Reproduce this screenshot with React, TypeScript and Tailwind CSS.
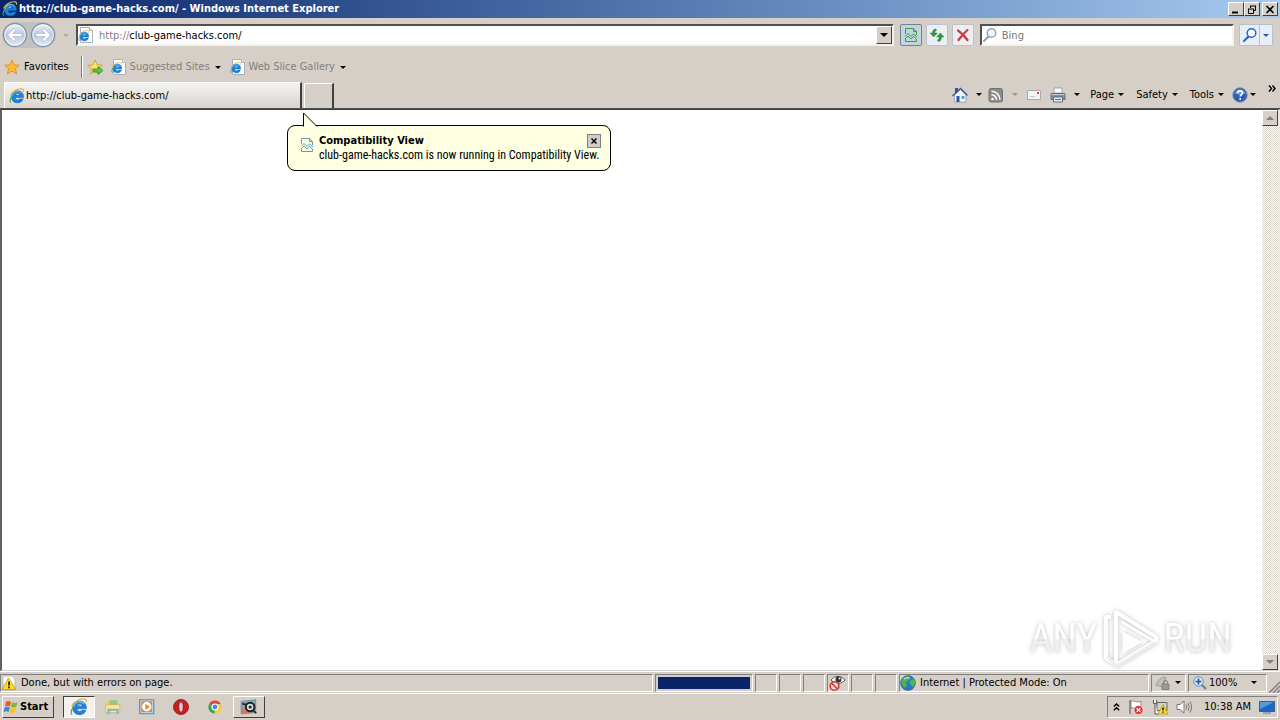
import { useState, type ReactNode } from 'react';

const IeMark = () => (
  <g>
    <path d="M4 11.500C1.500 9 2.500 4 7 2.500l5 1.500" fill="#8fd0f2" />
    <path d="M14.600 9.600H6.200c.2 1.500 1 2.300 2.400 2.300.9 0 1.500-.3 2-1h3.600c-.8 2.500-2.900 3.900-5.700 3.900-3.700 0-6-2.300-6-5.900s2.400-6.100 6-6.100c3.900 0 6.200 2.500 6.100 6.800zM6.200 7.300h4.600C10.600 5.900 9.800 5.200 8.500 5.200S6.500 5.900 6.200 7.300z" fill="#1d83dc" stroke="#1459ae" strokeWidth=".5" />
    <path d="M3.300 8C3.600 5.300 5.600 3.600 8.500 3.600c1.700 0 3 .6 3.900 1.600" fill="none" stroke="#74c8f7" strokeWidth="1" />
    <path d="M1.900 14.700C.5 13.500 1.200 10.500 3.300 7.400" fill="none" stroke="#4aa65a" strokeWidth="1.100" />
    <path d="M1.500 7.500C3 3.500 8.500 .3 13 .9c1.500.2 1.900 1.300 1.300 2.900" fill="none" stroke="#e9b32c" strokeWidth="1.100" />
  </g>
);

const IeIcon = ({ className = 'size-4' }: { className?: string }) => (
  <svg className={`${className} shrink-0`} viewBox="0 0 16 16"><IeMark /></svg>
);

const IePageIcon = () => (
  <svg className="size-4 shrink-0" viewBox="0 0 16 16">
    <path d="M2.500 .5h9l3 3v12h-12z" fill="#fff" stroke="#a7b0bc" />
    <path d="M11.500 .5v3h3" fill="#eef2f7" stroke="#a7b0bc" />
    <g transform="translate(0 3) scale(.74)"><IeMark /></g>
  </svg>
);

const Caret = ({ className = 'text-black' }: { className?: string }) => (
  <svg className={`h-[3px] w-[6px] shrink-0 ${className}`} viewBox="0 0 6 3"><path d="M0 0h6L3 3z" fill="currentColor" /></svg>
);

const StarShape = ({ small = false }: { small?: boolean }) => (
  <path
    d="M8 1l2.100 4.800 5.200.5-3.900 3.400 1.200 5.200L8 12.200l-4.600 2.700 1.200-5.200L.7 6.300l5.200-.5z"
    fill={small ? '#fbe26a' : '#fdb933'}
    stroke={small ? '#c99a18' : '#d98a1a'}
    strokeWidth=".8"
    strokeLinejoin="round"
  />
);

const ArrowCircle = ({ forward = false }: { forward?: boolean }) => (
  <svg className="size-[26px]" viewBox="0 0 26 26">
    <defs>
      <linearGradient id="orb" x1="0" y1="0" x2="0" y2="1">
        <stop offset="0" stopColor="#eef2f8" />
        <stop offset=".5" stopColor="#b9c9dd" />
        <stop offset="1" stopColor="#e4eef8" />
      </linearGradient>
    </defs>
    <circle cx="13" cy="13" r="11.500" fill="url(#orb)" stroke="#8492a5" strokeWidth="1.300" />
    <circle cx="13" cy="13" r="10.200" fill="none" stroke="#fff" strokeOpacity=".7" />
    <path
      d="M5.500 13l6.500-6.500 1.800 1.800L10.700 11.500H20v3h-9.300l3.100 3.200-1.800 1.800z"
      transform={forward ? 'rotate(180 13 13)' : undefined}
      fill="#fff"
      stroke="#9fb0c5"
      strokeWidth=".6"
    />
  </svg>
);

const Magnifier = ({ color, lens }: { color: string; lens: string }) => (
  <svg className="size-4 shrink-0" viewBox="0 0 16 16">
    <path d="M6.500 9.500L2 14" stroke={color} strokeWidth="2.200" strokeLinecap="round" />
    <circle cx="9.500" cy="6" r="4.300" fill={lens} stroke={color} strokeWidth="1.500" />
  </svg>
);

const CompatIcon = ({ color = '#35a046' }: { color?: string }) => (
  <svg className="size-4 shrink-0" viewBox="0 0 16 16">
    <path d="M2.500 7V1.500h8l3 3V8M2.500 11v3.500h11V12M10.500 1.500v3h3" fill="none" stroke={color} />
    <path d="M2 9.500l3-3 3 3 2.500-2.500L14 10M2 12l3-3 3 3 2.500-2.500 3 2.500" fill="none" stroke={color} />
  </svg>
);

const ToolButton = ({ label, active = false, children }: { label: string; active?: boolean; children: ReactNode }) => (
  <button
    aria-label={label}
    className={`flex size-[22px] items-center justify-center rounded-xs border ${
      active ? 'border-[#6d8494] bg-[#c5d3de]' : 'border-[#b9c2d0] bg-[#eceef2]'
    }`}
  >
    {children}
  </button>
);

const CaptionButton = ({ label, children }: { label: string; children: ReactNode }) => (
  <button
    aria-label={label}
    className="flex h-[14px] w-4 items-center justify-center border border-t-white border-r-[#404040] border-b-[#404040] border-l-white bg-[#d6cfc7]"
  >
    <svg className="h-[9px] w-[10px]" viewBox="0 0 10 9" fill="none" stroke="#000">{children}</svg>
  </button>
);

const TitleBar = () => (
  <header className="flex h-[18px] shrink-0 items-center bg-linear-to-r from-[#0a246a] to-[#a6caf0] pr-[2px] pl-[2px]">
    <IeIcon />
    <h1 className="ml-px flex-1 truncate text-[11px] font-bold text-white">http://club-game-hacks.com/ - Windows Internet Explorer</h1>
    <CaptionButton label="Minimize"><path d="M1 7.500h6" strokeWidth="2" /></CaptionButton>
    <CaptionButton label="Restore"><path d="M3 1h6M3.500 1v2M8.500 1v4.500H7M1 4h6M1.500 4v4.500h5V4" /></CaptionButton>
    <span className="w-[2px]" />
    <CaptionButton label="Close"><path d="M1.500 1l7 7M8.500 1l-7 7" strokeWidth="1.600" /></CaptionButton>
  </header>
);

const AddressRow = () => {
  const [address, setAddress] = useState('club-game-hacks.com/');
  const [query, setQuery] = useState('');

  return (
    <div className="flex h-[34px] shrink-0 items-center pr-[7px] pl-[2px]">
      <div className="flex gap-[2px] rounded-full bg-[#c2c1c2]">
        <button aria-label="Back"><ArrowCircle /></button>
        <button aria-label="Forward"><ArrowCircle forward /></button>
      </div>
      <button aria-label="Recent pages" className="mx-[6px] px-px"><Caret className="text-[#b0aaa3]" /></button>

      <div className="flex h-[22px] flex-1 items-center border-2 border-t-[#505050] border-r-[#f4f2ee] border-b-[#f4f2ee] border-l-[#505050] bg-white">
        <IePageIcon />
        <label htmlFor="address" className="ml-[5px] pt-[2px] text-[#808080]">http://</label>
        <input id="address" value={address} onChange={(e) => setAddress(e.target.value)} className="min-w-0 flex-1 pt-[2px] outline-none" />
        <button
          aria-label="Show address list"
          className="flex h-[18px] w-4 items-center justify-center border border-t-white border-r-[#404040] border-b-[#404040] border-l-white bg-[#d6cfc7]"
        >
          <svg className="h-1 w-2" viewBox="0 0 8 4"><path d="M0 0h8L4 4z" /></svg>
        </button>
      </div>

      <div className="mx-[6px] flex gap-1">
        <ToolButton label="Compatibility View" active><CompatIcon /></ToolButton>
        <ToolButton label="Refresh">
          <svg className="size-4" viewBox="0 0 16 16" fill="#2f9a3c" stroke="#1d7429" strokeWidth=".4">
            <path d="M7 2C4.800 2 3.500 3.500 3.500 6H1l3.700 4L8.300 6H5.800c0-1.500.3-2.200 1.700-2.500z" />
            <path d="M9 14.500c2.200 0 3.500-1.500 3.500-4.500H15l-3.700-4L7.700 10h2.500c0 1.700-.3 2.500-1.700 2.900z" />
          </svg>
        </ToolButton>
        <ToolButton label="Stop">
          <svg className="size-4" viewBox="0 0 16 16"><path d="M3 3.500c3 2 6.500 5.500 9.500 9.500M12.500 3C9 6 6 9.500 3.500 13" fill="none" stroke="#cf3a3c" strokeWidth="2.200" strokeLinecap="round" /></svg>
        </ToolButton>
      </div>

      <div className="flex h-[22px] w-1/5 items-center border-2 border-t-[#505050] border-r-[#f4f2ee] border-b-[#f4f2ee] border-l-[#505050] bg-white">
        <Magnifier color="#96a2b4" lens="#f3f7fb" />
        <input
          aria-label="Search"
          placeholder="Bing"
          value={query}
          onChange={(e) => setQuery(e.target.value)}
          className="ml-1 min-w-0 flex-1 pt-[2px] outline-none placeholder:text-[#777]"
        />
      </div>
      <div className="ml-[5px] flex h-[22px] rounded-xs border border-[#b4c0d4] bg-[#e9eef6]">
        <button aria-label="Go" className="flex w-5 items-center justify-center border-r border-[#b4c0d4]"><Magnifier color="#2566cc" lens="#fff" /></button>
        <button aria-label="Search options" className="flex w-3 items-center justify-center"><Caret className="text-[#2458b8]" /></button>
      </div>
    </div>
  );
};

const FavoritesRow = () => (
  <nav className="flex h-7 shrink-0 items-center pt-[2px] pl-1">
    <button className="flex items-center gap-1">
      <svg className="size-4" viewBox="0 0 16 16"><StarShape /></svg>
      Favorites
    </button>
    <span className="mx-3 h-[22px] w-[2px] border-r border-l border-r-white border-l-[#808080]" />
    <button aria-label="Add to Favorites Bar" className="-ml-2">
      <svg className="size-4" viewBox="0 0 16 16">
        <StarShape small />
        <path d="M6 10h5V7.500l5 4-5 4V13H6z" fill="#5fc540" stroke="#2d8a22" strokeWidth=".8" />
      </svg>
    </button>
    <button className="ml-2 flex items-center text-[#808080]">
      <IePageIcon />
      <span className="mr-[5px] ml-[3px]">Suggested Sites</span>
      <Caret />
    </button>
    <button className="ml-[9px] flex items-center text-[#808080]">
      <IePageIcon />
      <span className="mr-[5px] ml-[3px]">Web Slice Gallery</span>
      <Caret />
    </button>
  </nav>
);

const HomeIcon = () => (
  <svg className="size-4" viewBox="0 0 16 16">
    <path d="M3 1h3v5H3z" fill="#3d4f9a" />
    <path d="M2.500 8L8.500 2.500 14 8v7H2.500z" fill="#f2f5fa" stroke="#8a96b0" strokeWidth=".8" />
    <path d="M.5 9L8.500 1.500 15.500 8.500" fill="none" stroke="#3c5aa8" strokeWidth="1.500" />
    <path d="M4.500 9h3v6h-3z" fill="#28539f" />
    <path d="M9.500 9h3v3h-3z" fill="#59a0d8" />
  </svg>
);

const RssIcon = () => (
  <svg className="size-4" viewBox="0 0 16 16">
    <rect x="1" y="1.500" width="13.500" height="13.500" rx="2" fill="#8c8c8c" stroke="#707070" />
    <circle cx="4.500" cy="12" r="1.300" fill="#fff" />
    <path d="M3.500 7.700a5 5 0 015 5M3.500 4.300a8.400 8.400 0 018.400 8.400" fill="none" stroke="#fff" strokeWidth="1.600" />
  </svg>
);

const MailIcon = () => (
  <svg className="size-4" viewBox="0 0 16 16">
    <path d="M1.500 3.500h13v9h-13z" fill="#f5f4f4" stroke="#aaa7ab" />
    <path d="M11 5h2v2h-2z" fill="#d3475a" />
    <path d="M4 9.500h5" stroke="#c4c7d2" />
  </svg>
);

const PrintIcon = () => (
  <svg className="size-4" viewBox="0 0 16 16">
    <path d="M4 1h8v5H4z" fill="#fff" stroke="#8e949e" strokeWidth=".8" />
    <path d="M1 6.500h14v6H1z" fill="#8b929c" stroke="#565d68" strokeWidth=".8" />
    <path d="M1.500 7.500h13" stroke="#c8ccd2" />
    <path d="M3.500 10h9v5h-9z" fill="#dfe9f5" stroke="#4c5665" strokeWidth=".8" />
    <path d="M5 12.500h6" stroke="#3f78bf" />
  </svg>
);

const HelpIcon = () => (
  <svg className="size-4" viewBox="0 0 16 16">
    <circle cx="8" cy="8" r="7.200" fill="#2e5cb8" stroke="#7d8ca8" />
    <path d="M2.500 6.500a5.800 5.800 0 0111 0C10 8 6 8 2.500 6.500z" fill="#6f96dc" />
    <path d="M5.700 6.200c0-3.200 4.800-3 4.800-.3 0 1.700-2.300 1.800-2.300 3.700M8.200 11v1.700" fill="none" stroke="#fff" strokeWidth="1.600" />
  </svg>
);

const TabRow = () => (
  <div className="flex h-[29px] shrink-0 items-end justify-between border-b border-[#505050] pl-1">
    <div role="tablist" className="flex items-end">
      <button
        role="tab"
        aria-selected="true"
        className="flex h-[26px] w-[298px] items-center gap-px border-t border-r-2 border-l border-t-white border-r-[#404040] border-l-white bg-linear-to-b from-[#f5f4f2] to-[#d9d4cd] pl-1"
      >
        <IeIcon />
        http://club-game-hacks.com/
      </button>
      <button aria-label="New Tab" className="ml-[2px] h-[25px] w-[30px] border-t border-r-2 border-l border-t-white border-r-[#404040] border-l-white" />
    </div>
    <div className="flex h-[28px] items-center pt-px pr-1">
      <button aria-label="Home" className="mr-2"><HomeIcon /></button>
      <button aria-label="Home options" className="mr-[6px]"><Caret /></button>
      <button aria-label="Feeds" className="mr-2"><RssIcon /></button>
      <button aria-label="Feed options" className="mr-2"><Caret className="text-[#a09890]" /></button>
      <button aria-label="Read mail" className="mr-2"><MailIcon /></button>
      <button aria-label="Print" className="mr-2"><PrintIcon /></button>
      <button aria-label="Print options" className="mr-[10px]"><Caret /></button>
      <button className="mr-3 flex items-center gap-1">Page<Caret /></button>
      <button className="mr-3 flex items-center gap-1">Safety<Caret /></button>
      <button className="mr-2 flex items-center gap-1">Tools<Caret /></button>
      <button aria-label="Help" className="mr-3 flex items-center gap-[2px]"><HelpIcon /><Caret /></button>
      <button aria-label="More commands" className="self-start pt-1">
        <svg className="h-[7px] w-2" viewBox="0 0 8 7"><path d="M1 .5l2.500 3L1 6.500M4.500 .5l2.500 3-2.500 3" fill="none" stroke="#000" strokeWidth="1.400" /></svg>
      </button>
    </div>
  </div>
);

const Balloon = () => {
  const [open, setOpen] = useState(true);
  if (!open) return null;

  return (
    <div role="status" className="absolute top-[15px] left-[285px] flex h-[46px] w-[324px] rounded-lg border border-black bg-[#ffffe1] pt-2 pl-[11px]">
      <svg className="absolute -top-[14px] left-[15px] h-[15px] w-4" viewBox="0 0 16 15">
        <path d="M.5 15V1l13.500 13.500V15z" fill="#ffffe1" />
        <path d="M.5 14.500V1L14 14.500" fill="none" stroke="#000" />
      </svg>
      <span className="pt-[3px]"><CompatIcon color="#5a9fbe" /></span>
      <div className="ml-1 leading-[14px]">
        <p className="font-bold">Compatibility View</p>
        <p className="whitespace-nowrap font-['Roboto_Condensed','Roboto',sans-serif] text-[12px]">club-game-hacks.com is now running in Compatibility View.</p>
      </div>
      <button
        aria-label="Close"
        onClick={() => setOpen(false)}
        className="absolute top-2 right-[9px] flex size-[14px] items-center justify-center border border-[#808080] bg-[#d0ccc8]"
      >
        <svg className="size-[6px]" viewBox="0 0 6 6"><path d="M.5.5l5 5M5.500.5l-5 5" stroke="#000" strokeWidth="1.500" /></svg>
      </button>
    </div>
  );
};

const Watermark = () => (
  <div className="absolute right-[46px] bottom-0 flex items-center gap-1 font-['Roboto_Condensed','Roboto',sans-serif] text-[40px] leading-none text-white drop-shadow-[0_0_2px_rgba(0,0,0,0.25)]">
    <span className="bg-linear-to-b from-white from-50% to-[#f0f0f0] to-50% bg-clip-text text-transparent">ANY</span>
    <svg className="h-[62px] w-[58px]" viewBox="0 0 58 62" fill="none" stroke="#fff" strokeLinejoin="round">
      <path d="M9 9H4v41l8 5" strokeWidth="4" />
      <path d="M14 4l40 25v4L14 57z" strokeWidth="4" />
      <path d="M20 14l32 19" strokeWidth="3" />
      <path d="M21 24l18 10-18 11z" strokeWidth="1" fill="#fff" />
      <path d="M5 49l10 9 39-24" stroke="#ededed" strokeWidth="3" />
    </svg>
    <span className="bg-linear-to-b from-white from-50% to-[#f0f0f0] to-50% bg-clip-text text-transparent">RUN</span>
  </div>
);

const ScrollButton = ({ up = false }: { up?: boolean }) => (
  <button
    aria-label={up ? 'Scroll up' : 'Scroll down'}
    className="flex size-4 items-center justify-center border border-t-white border-r-[#404040] border-b-[#404040] border-l-white bg-[#d6cfc7]"
  >
    <svg className="h-1 w-2" viewBox="0 0 8 4"><path d={up ? 'M0 4h8L4 0z' : 'M0 0h8L4 4z'} fill="#808080" /></svg>
  </button>
);

const Viewport = () => (
  <main className="relative flex min-h-0 flex-1 border-t border-r-2 border-b border-l-2 border-t-[#404040] border-r-[#ebe7e1] border-b-[#d6cfc7] border-l-[#606060] bg-white">
    <div className="flex-1" />
    <div className="flex w-4 flex-col justify-between bg-[conic-gradient(#fff_25%,#d8d2ca_0_50%,#fff_0_75%,#d8d2ca_0)] bg-size-[2px_2px]">
      <ScrollButton up />
      <ScrollButton />
    </div>
    <Balloon />
    <Watermark />
  </main>
);

const Panel = ({ className = 'w-[22px]', children }: { className?: string; children?: ReactNode }) => (
  <div className={`flex h-[18px] shrink-0 items-center border border-t-[#808080] border-r-white border-b-white border-l-[#808080] ${className}`}>{children}</div>
);

const StatusBar = () => (
  <footer className="flex h-[22px] shrink-0 items-center gap-[2px] border-t border-white">
    <Panel className="min-w-0 flex-1 gap-1">
      <svg className="size-4" viewBox="0 0 16 16">
        <path d="M2 1h9l3 3v11H2z" fill="#fff" stroke="#b5b5a8" strokeWidth=".8" />
        <path d="M7.500 3L15 14.500H1z" fill="#ffdc28" stroke="#b99812" strokeWidth=".8" />
        <path d="M8 6.500v4M8 11.500v1.700" stroke="#000" strokeWidth="1.500" />
      </svg>
      Done, but with errors on page.
    </Panel>
    <Panel className="w-[98px] p-[2px]">
      <div role="progressbar" aria-label="Page loading" className="h-3 w-full bg-[#0a246a]" />
    </Panel>
    <Panel />
    <Panel />
    <Panel />
    <Panel>
      <svg className="size-[18px]" viewBox="0 0 18 18">
        <path d="M3 6c4-5 10-4.500 14 0-3 4-9 4.500-13 1z" fill="#fff" stroke="#555" />
        <circle cx="10.500" cy="5.500" r="3" fill="#333" />
        <circle cx="11.500" cy="4.500" r="1" fill="#fff" />
        <circle cx="6.500" cy="12" r="4.300" fill="#f7dedd" stroke="#cf3532" strokeWidth="1.600" />
        <path d="M3.700 9.200l5.600 5.600" stroke="#cf3532" strokeWidth="1.600" />
      </svg>
    </Panel>
    <Panel />
    <Panel />
    <Panel className="w-[250px] gap-1">
      <svg className="size-4" viewBox="0 0 16 16">
        <circle cx="8" cy="8" r="7.400" fill="#2d77c8" stroke="#36638e" strokeWidth=".7" />
        <path d="M2 5c1-3 4-4 6-4l2 2-2 3-2 1 1 3-2 3C2 11 1 8 2 5zM11 5l3-1c2 3 1 6-1 8l-2-2-2-2z" fill="#4fb648" />
        <path d="M4 4a6 5 0 016-1" stroke="#c5ecff" fill="none" />
      </svg>
      Internet | Protected Mode: On
    </Panel>
    <Panel className="w-[35px] justify-between pr-[4px] pl-[3px]">
      <svg className="size-4" viewBox="0 0 16 16">
        <path d="M1 10c3-7 8-9 10-7l-3 9z" fill="#c3c1c0" stroke="#929090" strokeWidth=".8" />
        <path d="M8.500 9V7.500a2 2 0 014 0V9" fill="none" stroke="#777" />
        <path d="M7 9h7v5.500H7z" fill="#9c9a98" stroke="#777" strokeWidth=".8" />
      </svg>
      <Caret />
    </Panel>
    <Panel className="w-[79px] pl-[4px]">
      <button className="flex w-full items-center gap-[2px]">
        <svg className="size-[14px]" viewBox="0 0 14 14">
          <path d="M8 8l5 5" stroke="#777e88" strokeWidth="2.200" />
          <circle cx="5.500" cy="5.500" r="4.700" fill="#e6f2fb" stroke="#4c8ecb" />
          <path d="M5.500 2.500v6M2.500 5.500h6" stroke="#1858aa" strokeWidth="1.700" />
        </svg>
        100%
        <span className="ml-auto pr-[9px]"><Caret /></span>
      </button>
    </Panel>
    <svg className="h-3 w-[11px] self-end" viewBox="0 0 11 12"><path d="M0 12L11 1M4 12l7-7M8 12l3-3" stroke="#808080" strokeWidth="1.500" /></svg>
  </footer>
);

const TaskButton = ({ label, look = 'border-transparent', children }: { label: string; look?: string; children: ReactNode }) => (
  <button aria-label={label} className={`flex h-[22px] w-8 items-center justify-center border ${look}`}>
    <svg className="size-[18px]" viewBox="0 0 16 16">{children}</svg>
  </button>
);

const TaskBar = () => (
  <div className="flex h-[27px] shrink-0 items-center border-t border-white pr-[2px] pl-[2px]">
    <button className="mr-[9px] flex h-[22px] w-[52px] items-center gap-px border border-t-white border-r-[#404040] border-b-[#404040] border-l-white font-bold">
      <svg className="size-4 shrink-0" viewBox="0 0 16 16">
        <path d="M3 3c2-1.500 3.500-1 5 0L7 7.500c-2-1.200-3.500-1-5 0z" fill="#ea5b26" />
        <path d="M9 3.200c2 1 3.500 1 5.500 0L13.300 7.800c-2 1-3.500.8-5.300 0z" fill="#7dbb32" />
        <path d="M1.700 8.500c2-1.200 3.500-1 5 0L5.500 13c-1.500-1-3-1-5 .2z" fill="#3c85d6" />
        <path d="M7.700 8.800c2 1 3.500.9 5.400 0L12 13.300c-2 1-3.800.8-5.500-.1z" fill="#f9c127" />
      </svg>
      Start
    </button>
    <div className="flex gap-[2px]">
      <TaskButton label="Internet Explorer" look="border-t-[#404040] border-l-[#404040] border-r-white border-b-white bg-[#f4f2ef]"><IeMark /></TaskButton>
      <TaskButton label="Explorer">
        <path d="M2 3h4l1 1.500h6V14H2z" fill="#eec95a" />
        <path d="M5 2h7v5H5z" fill="#8ecb78" />
        <path d="M1.500 6h12.500v7H1.500z" fill="#f9e59b" stroke="#d5ae48" strokeWidth=".6" />
        <path d="M4 14.500v-4h8v4" fill="none" stroke="#74b5e0" strokeWidth="1.800" />
      </TaskButton>
      <TaskButton label="Media Player">
        <path d="M1.500 1.500h12.500v12.500h-12.500z" fill="#b9d6ee" stroke="#4d8cc2" />
        <path d="M3 3h9.500v9.500H3z" fill="#f0841c" />
        <circle cx="7.800" cy="7.800" r="4.200" fill="#fff" />
        <path d="M6.500 5l4 2.800-4 2.800z" fill="#f0841c" />
      </TaskButton>
      <TaskButton label="Opera">
        <circle cx="8" cy="8" r="6.700" fill="#c81e25" stroke="#8d1117" strokeWidth=".7" />
        <ellipse cx="8" cy="8" rx="2" ry="4.600" fill="#d6cfc7" stroke="#8d1117" strokeWidth=".7" />
      </TaskButton>
      <TaskButton label="Chrome">
        <path d="M8 8L2.900 5A5.900 5.900 0 0113.300 5.500H8z" fill="#df4636" />
        <path d="M8 8l5.300-2.500A5.900 5.900 0 017.500 13.900z" fill="#fbcb2c" />
        <path d="M8 8l-.5 5.900A5.900 5.900 0 012.900 5z" fill="#39a556" />
        <circle cx="8" cy="8" r="2.700" fill="#4688ef" stroke="#fff" />
      </TaskButton>
      <TaskButton label="Capture" look="border-t-white border-l-white border-r-[#404040] border-b-[#404040]">
        <path d="M1 3l13-1.500V13L1 14z" fill="#7fa9bc" stroke="#5d7f90" strokeWidth=".6" />
        <path d="M1 9l7 1v4l-7 .500z" fill="#df7259" />
        <circle cx="9" cy="8" r="3.800" fill="#ddd" stroke="#222" strokeWidth="1.800" />
        <circle cx="9" cy="8" r="1.400" fill="#222" />
        <path d="M2 5l4 1M11.500 11l3 2.500" stroke="#222" strokeWidth="1.400" />
      </TaskButton>
    </div>

    <div className="ml-auto flex h-[22px] items-center gap-2 border border-t-[#808080] border-r-white border-b-white border-l-[#808080] pr-[2px] pl-[5px]">
      <button aria-label="Show hidden icons">
        <svg className="h-2 w-[7px]" viewBox="0 0 7 8"><path d="M.8 3.500L3.500 1l2.700 2.500M.8 7.300l2.700-2.500 2.700 2.500" fill="none" stroke="#000" strokeWidth="1.500" /></svg>
      </button>
      <svg className="size-4" viewBox="0 0 16 16">
        <path d="M2 1v14" stroke="#777" strokeWidth="1.500" />
        <path d="M3 2c3-1 5 2 10 .5v7C8 11 6 8 3 9z" fill="#fff" stroke="#777" strokeWidth=".8" />
        <circle cx="10.500" cy="11" r="4.500" fill="#de3037" stroke="#fff" strokeWidth=".6" />
        <path d="M8.700 9.200l3.600 3.600M12.300 9.200l-3.600 3.600" stroke="#fff" strokeWidth="1.400" />
      </svg>
      <svg className="size-4" viewBox="0 0 16 16">
        <path d="M5 3.500h10v8H5z" fill="#d2d2ce" stroke="#666" />
        <path d="M1.500 1v3.500h3V1M3 4.500V15h3" fill="#fff" stroke="#555" />
        <path d="M11 5.500l5 9.500H6z" fill="#ffdc28" stroke="#b59310" strokeWidth=".7" />
        <path d="M11 8.500v3M11 12.500v1.300" stroke="#000" strokeWidth="1.300" />
      </svg>
      <svg className="size-4" viewBox="0 0 16 16" fill="none" stroke="#777">
        <path d="M1 5.500h3L8 2v12l-4-3.500H1z" fill="#fff" />
        <path d="M10 5.500q1.500 2.500 0 5M12 4q2.500 4 0 8M14 2.500q3.200 5.500 0 11" />
      </svg>
      <time className="ml-1 whitespace-nowrap">10:38 AM</time>
      <svg className="h-[14px] w-4" viewBox="0 0 16 14">
        <path d="M.5 1.500h15v10H.5z" fill="#1d68c4" stroke="#3c5d8f" />
        <path d="M1 2h14L1 9z" fill="#559be3" />
        <path d="M4 13h8" stroke="#68778c" />
      </svg>
    </div>
  </div>
);

const App = () => (
  <div className="flex h-screen flex-col overflow-hidden bg-[#d6cfc7] font-['Tahoma','DejaVu_Sans_Condensed','DejaVu_Sans',sans-serif] text-[11px] leading-[14px] text-black">
    <TitleBar />
    <AddressRow />
    <FavoritesRow />
    <TabRow />
    <Viewport />
    <StatusBar />
    <TaskBar />
  </div>
);

export default App;
